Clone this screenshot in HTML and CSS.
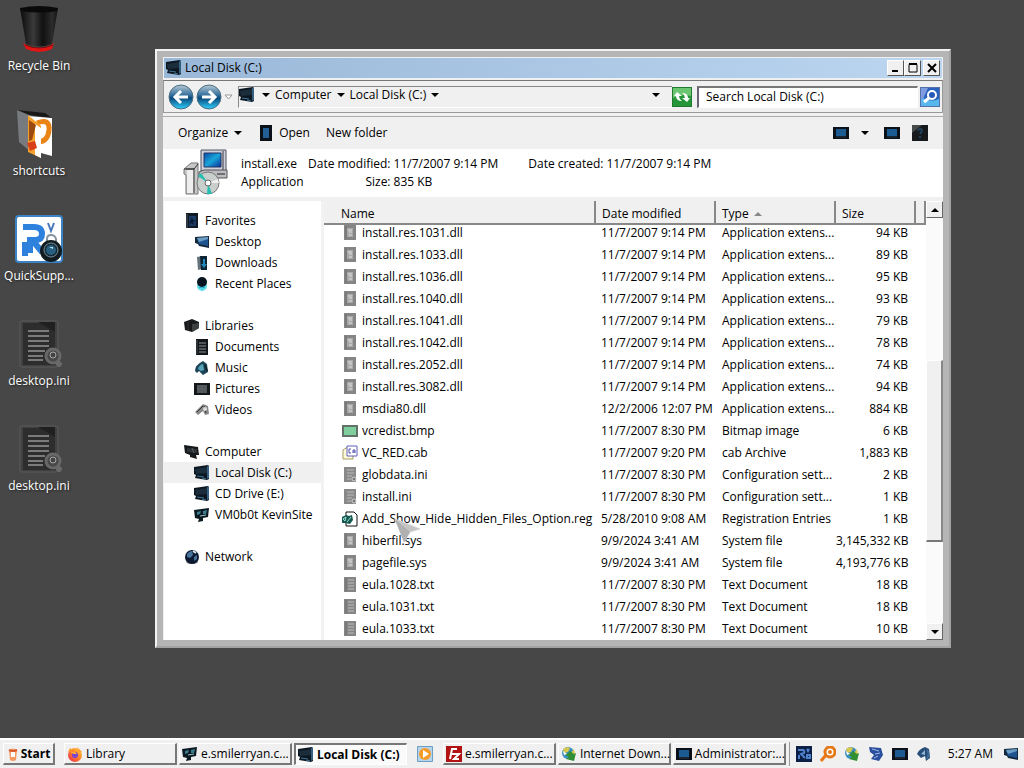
FILE: index.html
```
<!DOCTYPE html>
<html lang="en">
<head>
    <meta charset="utf-8">
    <meta name="viewport" content="width=device-width, initial-scale=1">
    <link rel="stylesheet" href="styles.css">
    <title>Local Disk (C:)</title>
</head>
<body>
<!-- shared icons -->
<svg class="defs" aria-hidden="true">
    <defs>
        <linearGradient id="g-blue" x1="0" y1="0" x2="0" y2="1">
            <stop offset="0" stop-color="#b9c9d3"/><stop offset=".4" stop-color="#3a75a0"/><stop offset=".55" stop-color="#0b4a7c"/><stop offset="1" stop-color="#2fd0ff"/>
        </linearGradient>
        <linearGradient id="g-bin"><stop offset="0" stop-color="#0a0a0a"/><stop offset=".35" stop-color="#3a3a3a"/><stop offset=".6" stop-color="#111"/><stop offset=".85" stop-color="#2c2c2c"/><stop offset="1" stop-color="#111"/></linearGradient>
        <linearGradient id="g-screen" x1="0" y1="0" x2="1" y2="1"><stop offset="0" stop-color="#0a4aa8"/><stop offset=".5" stop-color="#19a5d8"/><stop offset="1" stop-color="#0b2f9a"/></linearGradient>
        <linearGradient id="g-fox" x1="1" y1="0" x2="0" y2="1"><stop offset="0" stop-color="#ffd93b"/><stop offset=".5" stop-color="#ff7a2a"/><stop offset="1" stop-color="#e8265a"/></linearGradient>
    </defs>
    <symbol id="i-drive" viewBox="0 0 16 16">
        <path d="M0 2 14 0 15 1V14L13 15 1 13 2 10 0 9Z" fill="#0c1722"/><path d="M1 4 13 2V8L2 9Z" fill="#1b2c3b"/><path d="M13 1 15 1V13L13 14Z" fill="#35607f"/><path d="M3 11 10 12M8 13 12 14" stroke="#3f7392" fill="none"/>
    </symbol>
    <symbol id="i-pc" viewBox="0 0 16 16">
        <path d="M0 1 14 3 15 11 12 11 13 15 6 13V11L1 9Z" fill="#15191c"/><path d="M3 4 13 5 13 9 3 8Z" fill="#2d3336"/><path d="M8 4 10 9" stroke="#596066"/>
    </symbol>
    <symbol id="i-site" viewBox="0 0 16 16">
        <path d="M0 3 15 1 14 10 9 11 9 14 4 15 5 12 1 11Z" fill="#0b1a22"/><path d="M3 5 7 4 6 7 3 8ZM9 4 13 3 12 7 9 7Z" fill="#3b7d90"/><path d="M6 9 12 8" stroke="#9fc5cc"/>
    </symbol>
    <symbol id="i-star" viewBox="0 0 16 16">
        <path d="M2 0H14V15H2Z" fill="#121a24"/><path d="M5 3H12V13H5Z" fill="#1b3d68"/><path d="M8 4 9 7 12 7 9 9 10 12 7 10 5 12 6 8" fill="#0c1c36"/><path d="M3 1V15" stroke="#4b5864"/>
    </symbol>
    <symbol id="i-desktop" viewBox="0 0 16 16">
        <path d="M1 3 15 2V14L5 12 4 10 1 9Z" fill="#14283c"/><path d="M3 4 14 3V12L5 10Z" fill="#1e5590"/><path d="M3 4 14 3V5L5 8Z" fill="#6b9ec5"/>
    </symbol>
    <symbol id="i-down" viewBox="0 0 16 16">
        <path d="M3 2 8 1V14L4 15Z" fill="#66737b"/><path d="M6 1H13V15H7Z" fill="#0d2434"/><path d="M9 4H11V9H13L10 13 7 9H9Z" fill="#2689bb"/>
    </symbol>
    <symbol id="i-recent" viewBox="0 0 16 16">
        <circle cx="8" cy="10" r="5" fill="#5edbe9"/><circle cx="8" cy="6" r="5" fill="#07141f"/><path d="M5 11Q8 13 11 11" stroke="#1aa2c0" fill="none"/>
    </symbol>
    <symbol id="i-lib" viewBox="0 0 16 16">
        <path d="M0 4 8 1 15 4 15 10 8 14 1 12Z" fill="#17191a"/><path d="M8 6 15 5V10L8 14Z" fill="#3d4041"/><path d="M4 4V12" stroke="#34383a"/>
    </symbol>
    <symbol id="i-doc" viewBox="0 0 16 16">
        <path d="M2 0H14V16H2Z" fill="#14181b"/><path d="M5 4H12M5 7H12M5 10H12M5 13H12" stroke="#8a9499"/><path d="M3 1V15" stroke="#444c50"/>
    </symbol>
    <symbol id="i-music" viewBox="0 0 16 16">
        <path d="M1 11Q1 5 9 1L13 4 14 12 9 15 5 11 3 13Z" fill="#1c4658"/><path d="M4 9Q5 5 9 4L10 10 7 11Z" fill="#57a3b8"/><path d="M11 5 13 11" stroke="#10222d" stroke-width="2"/>
    </symbol>
    <symbol id="i-pic" viewBox="0 0 16 16">
        <path d="M0 2H16V14H0Z" fill="#15181a"/><path d="M3 4H13V12H3Z" fill="#50585b"/><path d="M3 8H13M8 4V12" stroke="#5a6266"/>
    </symbol>
    <symbol id="i-video" viewBox="0 0 16 16">
        <path d="M1 10 9 2 14 4 15 12 11 13 9 9 4 13Z" fill="#888"/><path d="M3 10 9 4M10 4 12 11" stroke="#333" fill="none"/><circle cx="11" cy="7" r="2" fill="#ddd"/>
    </symbol>
    <symbol id="i-net" viewBox="0 0 16 16">
        <ellipse cx="8" cy="13" rx="6" ry="2" fill="#999"/><circle cx="8" cy="8" r="7" fill="#0b1830"/><path d="M3 5Q5 2 8 2L9 6 6 9 3 8ZM10 8 13 6 13 10 10 12Z" fill="#46749c"/><path d="M9 2 12 4" stroke="#d9eaf5" stroke-width="2"/>
    </symbol>
    <symbol id="i-file" viewBox="0 0 16 16">
        <path d="M2 0H14V15H2Z" fill="#858585"/><path d="M4 1V14" stroke="#707070"/><path d="M5 3H11V12H5Z" fill="#a9a9a9"/><path d="M6 5H10M7 7H10M7 10H10" stroke="#dedede"/>
    </symbol>
    <symbol id="i-text" viewBox="0 0 16 16">
        <path d="M2 0H14V15H2Z" fill="#858585"/><path d="M4 1V14" stroke="#707070"/><path d="M6 3H12M6 6H12M6 9H12M6 12H12" stroke="#bdbdbd"/>
    </symbol>
    <symbol id="i-ini" viewBox="0 0 16 16">
        <path d="M2 0H14V15H2Z" fill="#888"/><path d="M5 3H12M5 6H12M5 9H10M5 12H9" stroke="#bbb"/><circle cx="12" cy="12" r="2" fill="#777" stroke="#d2d2d2"/>
    </symbol>
    <symbol id="i-bmp" viewBox="0 0 16 16">
        <path d="M0 2H16V14H0Z" fill="#627268"/><path d="M2 4H14V12H2Z" fill="#7fce9d"/>
    </symbol>
    <symbol id="i-cab" viewBox="0 0 16 16">
        <path d="M1 5 4 3H11V14H1Z" fill="#fffbd9" stroke="#a49b62"/><path d="M5 1H15V11H5Z" fill="#fff" stroke="#6261b8"/><path d="M9 4H7V8H9M11 8V5H13V8M11 7H13" stroke="#5150b0" fill="none"/>
    </symbol>
    <symbol id="i-reg" viewBox="0 0 16 16">
        <path d="M4 1H12L15 4V15H4Z" fill="#fff" stroke="#111"/><path d="M0 6 4 4 7 5 10 4 11 9 8 13 3 12 0 12Z" fill="#155951"/><path d="M1 8 4 6 3 10ZM5 11 9 6" stroke="#a1e0d3" fill="none"/>
    </symbol>
    <symbol id="i-screen" viewBox="0 0 16 16">
        <path d="M0 2H16V14H0Z" fill="#0a1119"/><path d="M3 4H13V11H3Z" fill="#1b5b92"/><path d="M3 12H13" stroke="#263947"/>
    </symbol>
    <symbol id="i-refresh" viewBox="0 0 20 20">
        <path d="M0 0H20V20H0Z" fill="#27953a"/><path d="M1 1H19V9Q10 6 1 11Z" fill="#6cc570"/><path d="M2 9 5 5 10 9H7Q7 12 10 14 4 14 4 9Z" fill="#fff"/><path d="M18 11 15 15 10 11H13Q13 8 10 6 16 6 16 11Z" fill="#fff"/><path d="M.5.5H19.5V19.5H.5Z" fill="none" stroke="#217a30"/>
    </symbol>
    <symbol id="i-search" viewBox="0 0 20 20">
        <path d="M0 0H20V20H0Z" fill="#2b62be"/><path d="M1 10Q10 16 19 12V19H1Z" fill="#58b8ee"/><path d="M1 1H8L3 12H1Z" fill="#7f9ce0"/><circle cx="12" cy="8" r="4" fill="#2858b5" stroke="#fff" stroke-width="2"/><path d="M9 11 4 15" stroke="#fff" stroke-width="3"/><path d="M.5.5H19.5V19.5H.5Z" fill="none" stroke="#5572a8"/>
    </symbol>
    <symbol id="i-idm" viewBox="0 0 16 16">
        <circle cx="7" cy="7" r="6" fill="#3d8ec2"/><path d="M2 3Q6 0 9 2L7 6 3 7ZM9 8 13 3 14 8Z" fill="#d8c94c"/><path d="M3 8H6L9 5 13 8 15 7 13 15 5 13 8 11Z" fill="#2f8f32"/><path d="M2 5 6 8 3 9Z" fill="#fff"/>
    </symbol>
    <symbol id="i-ini-large" viewBox="0 0 48 48">
        <rect x="5" y="1" width="38" height="46" rx="2" fill="#414141" stroke="#5c5c5c"/><path d="M8 3H40V45H8Z" fill="#2d2d2d"/><path d="M23 2H40V12Z" fill="#202020"/>
        <path d="M13 11H34M13 16H34M13 21H34M13 26H34M13 31H30M13 36H28M13 40H28" stroke="#7b7b7b" stroke-width="2"/>
        <circle cx="38" cy="36" r="7" fill="#484848" stroke="#686868" stroke-width="3"/><circle cx="38" cy="35" r="3" fill="#444" stroke="#ababab"/><path d="M41 44H47M44 41V47" stroke="#6a6a6a" stroke-width="3"/>
    </symbol>
</svg>

<main class="desktop">
    <ul class="shortcuts">
        <li><a href="#">
            <svg viewBox="0 0 48 48"><path d="M8 38Q24 48 39 38L37 44Q24 50 11 44Z" fill="#e21515"/><path d="M5 3 43 3 37 39Q24 44 11 39Z" fill="url(#g-bin)"/><path d="M5 3Q24-1 43 3L42 6Q24 9 6 6Z" fill="#0a0a0a"/><path d="M10 40Q24 46 38 40" fill="none" stroke="#7d0d0d"/></svg>
            <span>Recycle Bin</span></a></li>
        <li><a href="#">
            <svg viewBox="0 0 48 48"><path d="M2 0 16 3V42L4 32Z" fill="#777b80"/><path d="M2 0 30 3 37 8 14 5Z" fill="#191919"/><path d="M13 6 37 8V46L26 43Z" fill="#fff"/><path d="M22 13Q35 8 34 20 33 31 24 32" fill="none" stroke="#e98415" stroke-width="5"/><path d="M13 5 26 16V48L13 42Z" fill="#f5a02b"/><path d="M20 14 26 18V48L20 45Z" fill="#fff"/><path d="M14 10 21 15 17 30 14 31Z" fill="#9a4b12"/><path d="M12 33 20 31 22 38 15 41Z" fill="#d83f18"/></svg>
            <span>shortcuts</span></a></li>
        <li><a href="#">
            <svg viewBox="0 0 48 48"><rect x="1" y="1" width="46" height="46" rx="3" fill="#fff" stroke="#3a83c7" stroke-width="2"/><path d="M8 12H19Q27 12 27 19 27 25 20 25H15V38M10 27V41M18 26 27 37" fill="none" stroke="#2e82de" stroke-width="6"/><path d="M33 8 36 16 39 8" fill="none" stroke="#4777b8" stroke-width="2"/><path d="M32 28V24Q32 20 36 20T41 24V28" fill="none" stroke="#8595a0" stroke-width="2"/><circle cx="36" cy="36" r="11" fill="#111b20"/><circle cx="36" cy="35" r="7" fill="#172b36" stroke="#778e99"/><circle cx="36" cy="35" r="5" fill="#285f80"/><path d="M34 32H38V34Z" fill="#bde9f4"/></svg>
            <span>QuickSupp...</span></a></li>
        <li><a href="#"><svg><use href="#i-ini-large"/></svg><span>desktop.ini</span></a></li>
        <li><a href="#"><svg><use href="#i-ini-large"/></svg><span>desktop.ini</span></a></li>
    </ul>

    <section class="window">
        <header class="titlebar">
            <svg class="icon"><use href="#i-drive"/></svg>
            <h1>Local Disk (C:)</h1>
            <button class="winbtn" aria-label="Minimize"><svg viewBox="0 0 12 12"><path d="M2 9H8" stroke="#000" stroke-width="2"/></svg></button>
            <button class="winbtn" aria-label="Maximize"><svg viewBox="0 0 12 12"><path d="M2 2.5H10V10H2Z" fill="none" stroke="#000"/><path d="M2 2H10" stroke="#000" stroke-width="2"/></svg></button>
            <button class="winbtn close" aria-label="Close"><svg viewBox="0 0 12 12"><path d="M2 2 10 10M10 2 2 10" stroke="#000" stroke-width="2"/></svg></button>
        </header>

        <nav class="addressbar">
            <div class="history">
                <button aria-label="Back"><svg viewBox="0 0 26 26"><circle cx="13" cy="13" r="12" fill="url(#g-blue)" stroke="#4c6e82"/><path d="M20 13H8M13 7 7 13 13 19" fill="none" stroke="#fff" stroke-width="3"/></svg></button>
                <button aria-label="Forward"><svg viewBox="0 0 26 26"><circle cx="13" cy="13" r="12" fill="url(#g-blue)" stroke="#4c6e82"/><path d="M6 13H18M13 7 19 13 13 19" fill="none" stroke="#fff" stroke-width="3"/></svg></button>
                <button class="recent" aria-label="Recent pages"><svg viewBox="0 0 9 6"><path d="M1 1H8L4.500 5Z" fill="#fff" stroke="#999"/></svg></button>
            </div>
            <div class="path">
                <svg class="icon"><use href="#i-drive"/></svg>
                <i class="arrow"></i><a href="#">Computer</a>
                <i class="arrow"></i><a href="#">Local Disk (C:)</a>
                <i class="arrow"></i>
                <button class="drop" aria-label="Previous locations"><i class="arrow"></i></button>
            </div>
            <button class="square" aria-label="Refresh"><svg><use href="#i-refresh"/></svg></button>
            <input class="search" type="text" aria-label="Search" placeholder="Search Local Disk (C:)">
            <button class="square go" aria-label="Go"><svg><use href="#i-search"/></svg></button>
        </nav>

        <div class="toolbar">
            <button class="organize">Organize <i class="arrow"></i></button>
            <button class="open"><svg class="icon" viewBox="0 0 16 16"><path d="M2 0H14V16H2Z" fill="#0b1118"/><path d="M5 3H11V13H5Z" fill="#235f94"/></svg> Open</button>
            <button>New folder</button>
            <div class="views">
                <button aria-label="Change view"><svg class="icon"><use href="#i-screen"/></svg></button>
                <button class="more" aria-label="More view options"><i class="arrow"></i></button>
                <button aria-label="Preview pane"><svg class="icon"><use href="#i-screen"/></svg></button>
                <button aria-label="Help"><svg class="icon" viewBox="0 0 16 16"><path d="M0 0H16V16H0Z" fill="#15191b"/><path d="M0 0H10L0 8Z" fill="#454a4b"/><path d="M6 6Q7 3 9 4T8 9M8 11V13" fill="none" stroke="#22405a" stroke-width="2"/></svg></button>
            </div>
        </div>

        <div class="details">
            <svg class="appicon" viewBox="0 0 48 48">
                <path d="M3 20 10 14H17V45H5V26L3 25Z" fill="#c7c7c7" stroke="#777"/><path d="M5 20H13V44M3 20 13 20 17 15" fill="none" stroke="#333"/><path d="M6 21H12V44H6Z" fill="#eee"/>
                <path d="M20 1H45V22H20Z" fill="#cfd2dd" stroke="#4d4f58"/><path d="M23 4H40V18H23Z" fill="url(#g-screen)" stroke="#243564"/><path d="M42 2V21" stroke="#81838d" stroke-width="2"/>
                <path d="M18 23 23 21H46V29H18Z" fill="#bcbcc2" stroke="#555"/><path d="M36 25H44" stroke="#222"/>
                <circle cx="27" cy="34" r="11" fill="#c9cfcd" stroke="#777"/><path d="M27 34 17 27 20 24ZM27 34 31 45 26 45Z" fill="#25beb0"/><path d="M27 34 37 30 38 34Z" fill="#eee"/><circle cx="27" cy="34" r="3" fill="#fff" stroke="#666"/>
            </svg>
            <div class="what"><b>install.exe</b><span>Application</span></div>
            <dl>
                <dt>Date modified:</dt><dd>11/7/2007 9:14 PM</dd>
                <dt>Size:</dt><dd>835 KB</dd>
            </dl>
            <dl class="created">
                <dt>Date created:</dt><dd>11/7/2007 9:14 PM</dd>
            </dl>
        </div>

        <div class="content">
            <nav class="tree">
                <ul>
                    <li><a href="#"><svg class="icon"><use href="#i-star"/></svg>Favorites</a>
                        <ul>
                            <li><a href="#"><svg class="icon"><use href="#i-desktop"/></svg>Desktop</a></li>
                            <li><a href="#"><svg class="icon"><use href="#i-down"/></svg>Downloads</a></li>
                            <li><a href="#"><svg class="icon"><use href="#i-recent"/></svg>Recent Places</a></li>
                        </ul>
                    </li>
                    <li><a href="#"><svg class="icon"><use href="#i-lib"/></svg>Libraries</a>
                        <ul>
                            <li><a href="#"><svg class="icon"><use href="#i-doc"/></svg>Documents</a></li>
                            <li><a href="#"><svg class="icon"><use href="#i-music"/></svg>Music</a></li>
                            <li><a href="#"><svg class="icon"><use href="#i-pic"/></svg>Pictures</a></li>
                            <li><a href="#"><svg class="icon"><use href="#i-video"/></svg>Videos</a></li>
                        </ul>
                    </li>
                    <li><a href="#"><svg class="icon"><use href="#i-pc"/></svg>Computer</a>
                        <ul>
                            <li><a href="#" class="current"><svg class="icon"><use href="#i-drive"/></svg>Local Disk (C:)</a></li>
                            <li><a href="#"><svg class="icon"><use href="#i-drive"/></svg>CD Drive (E:)</a></li>
                            <li><a href="#"><svg class="icon"><use href="#i-site"/></svg>VM0b0t KevinSite</a></li>
                        </ul>
                    </li>
                    <li><a href="#"><svg class="icon"><use href="#i-net"/></svg>Network</a></li>
                </ul>
            </nav>

            <div class="files">
                <table>
                    <colgroup><col><col class="c-date"><col class="c-type"><col class="c-size"><col class="c-end"></colgroup>
                    <thead>
                        <tr><th>Name</th><th>Date modified</th><th>Type <i class="sort"></i></th><th>Size</th><th></th></tr>
                    </thead>
                    <tbody>
                        <tr class="cut"><td><svg class="icon"><use href="#i-file"/></svg>install.res.1031.dll</td><td>11/7/2007 9:14 PM</td><td>Application extens...</td><td>94 KB</td><td></td></tr>
                        <tr><td><svg class="icon"><use href="#i-file"/></svg>install.res.1033.dll</td><td>11/7/2007 9:14 PM</td><td>Application extens...</td><td>89 KB</td><td></td></tr>
                        <tr><td><svg class="icon"><use href="#i-file"/></svg>install.res.1036.dll</td><td>11/7/2007 9:14 PM</td><td>Application extens...</td><td>95 KB</td><td></td></tr>
                        <tr><td><svg class="icon"><use href="#i-file"/></svg>install.res.1040.dll</td><td>11/7/2007 9:14 PM</td><td>Application extens...</td><td>93 KB</td><td></td></tr>
                        <tr><td><svg class="icon"><use href="#i-file"/></svg>install.res.1041.dll</td><td>11/7/2007 9:14 PM</td><td>Application extens...</td><td>79 KB</td><td></td></tr>
                        <tr><td><svg class="icon"><use href="#i-file"/></svg>install.res.1042.dll</td><td>11/7/2007 9:14 PM</td><td>Application extens...</td><td>78 KB</td><td></td></tr>
                        <tr><td><svg class="icon"><use href="#i-file"/></svg>install.res.2052.dll</td><td>11/7/2007 9:14 PM</td><td>Application extens...</td><td>74 KB</td><td></td></tr>
                        <tr><td><svg class="icon"><use href="#i-file"/></svg>install.res.3082.dll</td><td>11/7/2007 9:14 PM</td><td>Application extens...</td><td>94 KB</td><td></td></tr>
                        <tr><td><svg class="icon"><use href="#i-file"/></svg>msdia80.dll</td><td>12/2/2006 12:07 PM</td><td>Application extens...</td><td>884 KB</td><td></td></tr>
                        <tr><td><svg class="icon"><use href="#i-bmp"/></svg>vcredist.bmp</td><td>11/7/2007 8:30 PM</td><td>Bitmap image</td><td>6 KB</td><td></td></tr>
                        <tr><td><svg class="icon"><use href="#i-cab"/></svg>VC_RED.cab</td><td>11/7/2007 9:20 PM</td><td>cab Archive</td><td>1,883 KB</td><td></td></tr>
                        <tr><td><svg class="icon"><use href="#i-ini"/></svg>globdata.ini</td><td>11/7/2007 8:30 PM</td><td>Configuration sett...</td><td>2 KB</td><td></td></tr>
                        <tr><td><svg class="icon"><use href="#i-ini"/></svg>install.ini</td><td>11/7/2007 8:30 PM</td><td>Configuration sett...</td><td>1 KB</td><td></td></tr>
                        <tr><td><svg class="icon"><use href="#i-reg"/></svg>Add_Show_Hide_Hidden_Files_Option.reg</td><td>5/28/2010 9:08 AM</td><td>Registration Entries</td><td>1 KB</td><td></td></tr>
                        <tr><td><svg class="icon"><use href="#i-file"/></svg>hiberfil.sys</td><td>9/9/2024 3:41 AM</td><td>System file</td><td>3,145,332 KB</td><td></td></tr>
                        <tr><td><svg class="icon"><use href="#i-file"/></svg>pagefile.sys</td><td>9/9/2024 3:41 AM</td><td>System file</td><td>4,193,776 KB</td><td></td></tr>
                        <tr><td><svg class="icon"><use href="#i-text"/></svg>eula.1028.txt</td><td>11/7/2007 8:30 PM</td><td>Text Document</td><td>18 KB</td><td></td></tr>
                        <tr><td><svg class="icon"><use href="#i-text"/></svg>eula.1031.txt</td><td>11/7/2007 8:30 PM</td><td>Text Document</td><td>18 KB</td><td></td></tr>
                        <tr><td><svg class="icon"><use href="#i-text"/></svg>eula.1033.txt</td><td>11/7/2007 8:30 PM</td><td>Text Document</td><td>10 KB</td><td></td></tr>
                    </tbody>
                </table>
            </div>
            <div class="scrollbar">
                <button aria-label="Scroll up"><i class="arrow up"></i></button>
                <div class="track"><div class="thumb"></div></div>
                <button aria-label="Scroll down"><i class="arrow"></i></button>
            </div>
        </div>
    </section>

    <svg class="cursor" viewBox="0 0 28 28"><path d="M1 1 26 11 16 14 10 24Z" fill="#c4c4c4" stroke="#d5d5d5"/><path d="M1 1 16 14 10 24Z" fill="#b0b0b0"/></svg>
</main>

<footer class="taskbar">
    <button class="start"><svg class="icon" viewBox="0 0 16 16"><path d="M4 4Q8 1 12 4L11 14Q8 16 5 14Z" fill="#f59a62"/><path d="M6 6H10V11H6Z" fill="#fff"/><path d="M4 4Q8 6 12 4" fill="none" stroke="#d65a2e" stroke-width="2"/></svg>Start</button>
    <div class="tasks">
        <button class="task"><svg class="icon" viewBox="0 0 16 16"><circle cx="8" cy="9" r="7" fill="url(#g-fox)"/><path d="M1 6 3 2 6 5ZM10 1 15 6 12 6Z" fill="#ff9d2c"/><circle cx="8" cy="9" r="3" fill="#7a45d0"/><path d="M3 6 8 6 10 8 7 8Z" fill="#ffb02e"/></svg><span>Library</span></button>
        <button class="task"><svg class="icon"><use href="#i-site"/></svg><span>e.smilerryan.c...</span></button>
        <button class="task active"><svg class="icon"><use href="#i-drive"/></svg><span>Local Disk (C:)</span></button>
        <button class="quick" aria-label="Media player"><svg class="icon" viewBox="0 0 16 16"><path d="M.5.5H15.5V15.5H.5Z" fill="#b6d4ea" stroke="#6d9ec4"/><circle cx="8" cy="8" r="6" fill="#f59b2a"/><path d="M6 4 12 8 6 12Z" fill="#fff"/></svg></button>
        <button class="task"><svg class="icon" viewBox="0 0 16 16"><path d="M0 0H16V16H0Z" fill="#b31212"/><path d="M4 13 6 3H11M5 8H9M8 8H13L8 13H13" fill="none" stroke="#fff" stroke-width="2"/></svg><span>e.smilerryan.c...</span></button>
        <button class="task"><svg class="icon"><use href="#i-idm"/></svg><span>Internet Down...</span></button>
        <button class="task"><svg class="icon"><use href="#i-screen"/></svg><span>Administrator:...</span></button>
    </div>
    <div class="tray">
        <svg class="icon" viewBox="0 0 16 16"><path d="M0 0H16V16H0Z" fill="#0c1f45"/><path d="M2 4H7Q9 5 8 7L5 8 9 12M3 9V13M11 3 12 5 13 3M11 9H14V12H11Z" fill="none" stroke="#4e82cc" stroke-width="2"/></svg>
        <svg class="icon" viewBox="0 0 16 16"><circle cx="10" cy="6" r="5" fill="#fff" stroke="#e67817" stroke-width="3"/><circle cx="10" cy="6" r="2" fill="#e67817"/><path d="M6 9 1 15" stroke="#e67817" stroke-width="3"/></svg>
        <svg class="icon"><use href="#i-idm"/></svg>
        <svg class="icon" viewBox="0 0 16 16"><path d="M1 1 13 2 15 9 11 15 3 13 6 9 2 6Z" fill="#2c4f9d"/><path d="M4 3 11 5M7 8 12 7M6 12 10 10" stroke="#9fb8e5" stroke-width="1"/></svg>
        <svg class="icon"><use href="#i-screen"/></svg>
        <svg class="icon" viewBox="0 0 16 16"><path d="M1 8Q3 3 9 1L13 3 14 12 10 15 9 10 5 12Z" fill="#284d77"/><path d="M5 8 9 4 9 9Z" fill="#90b5d5"/><path d="M11 4Q14 8 11 13" fill="none" stroke="#426b96" stroke-width="2"/></svg>
        <time>5:27 AM</time>
        <svg class="icon"><use href="#i-desktop"/></svg>
    </div>
</footer>
</body>
</html>
```
FILE: styles.css
```
*{
    box-sizing: border-box;
}
body{
    margin: 0;
    height: 100vh;
    display: flex;
    flex-direction: column;
    overflow: hidden;
    background: #474747;
    color: #000;
    font-family: "Open Sans", "Noto Sans", sans-serif;
    font-size: 12px;
    line-height: 16px;
}
ul, dl, dd, h1{
    margin: 0;
    padding: 0;
    list-style: none;
}
a{
    color: inherit;
    text-decoration: none;
}
button{
    display: flex;
    align-items: center;
    justify-content: center;
    padding: 0;
    border: none;
    background: none;
    color: inherit;
    font: inherit;
    white-space: nowrap;
}
.defs{
    position: absolute;
    width: 0;
    height: 0;
}
.icon{
    flex: none;
    width: 16px;
    height: 16px;
}
.arrow{
    flex: none;
    border: 4px solid transparent;
    border-top-color: #000;
    border-bottom: none;
}
.arrow.up{
    border-top: none;
    border-bottom: 4px solid #000;
}

/* desktop */
.desktop{
    position: relative;
    flex: 1;
    min-height: 0;
}
.shortcuts{
    width: 78px;
    padding-top: 5px;
    display: flex;
    flex-direction: column;
    gap: 36px;
}
.shortcuts a{
    display: flex;
    flex-direction: column;
    align-items: center;
    gap: 5px;
    color: #fff;
    text-shadow: 1px 1px 2px #222;
}
.shortcuts svg{
    width: 48px;
    height: 48px;
}

/* explorer window */
.window{
    position: absolute;
    inset: 49px 73px 90px 155px;
    display: flex;
    flex-direction: column;
    border: 2px solid #f2f2f2;
    border-right-color: #a3a3a3;
    border-bottom-color: #a3a3a3;
    background: #f0f0f0;
    box-shadow: inset 0 0 0 6px #b5b5b5;
    padding: 6px;
}
.titlebar{
    display: flex;
    align-items: center;
    height: 20px;
    margin: 1px 1px 2px;
    padding: 0 2px;
    background: linear-gradient(to right, #9ab8d8, #bcd6f1);
}
.titlebar h1{
    flex: 1;
    margin-left: 3px;
    font-size: 12px;
    font-weight: normal;
}
.winbtn{
    width: 17px;
    height: 16px;
    background: #f0f0f0;
    border: 1px solid #fff;
    border-right-color: #555;
    border-bottom-color: #555;
}
.winbtn svg{
    width: 12px;
    height: 12px;
}
.close{
    margin-left: 2px;
}
.addressbar{
    display: flex;
    align-items: center;
    height: 33px;
    padding: 0 2px 0 4px;
    border: 1px solid #999;
    border-top-color: #777;
}
.history{
    display: flex;
    align-items: center;
    gap: 2px;
    width: 70px;
}
.history svg{
    display: block;
    width: 26px;
    height: 26px;
}
.history .recent svg{
    width: 9px;
    height: 6px;
}
.path{
    flex: 1;
    display: flex;
    align-items: center;
    gap: 5px;
    height: 22px;
    padding-bottom: 3px;
    border-top: 1px solid #888;
    border-left: 1px solid #888;
    border-bottom: 1px solid #fff;
}
.path .icon{
    margin-right: 2px;
}
.drop{
    width: 20px;
    margin-left: auto;
    margin-right: 6px;
}
.square svg{
    display: block;
    width: 20px;
    height: 20px;
}
.search{
    width: 221px;
    height: 22px;
    margin: 0 2px 0 5px;
    padding: 0 7px 2px;
    border: 1px solid #fff;
    border-top: 2px solid #777;
    border-left: 2px solid #6b6179;
    background: #fff;
    font: inherit;
}
.search::placeholder{
    color: #000;
    opacity: 1;
}
.toolbar{
    display: flex;
    align-items: center;
    gap: 16px;
    height: 33px;
    margin-top: 3px;
    padding: 0 15px;
    border-top: 1px solid #aaa;
}
.toolbar .organize{
    gap: 6px;
}
.toolbar .open{
    gap: 5px;
}
.views{
    display: flex;
    gap: 12px;
    margin-left: auto;
}
.views .more{
    margin-right: 3px;
}
.details{
    display: flex;
    align-items: center;
    height: 48px;
    padding-left: 18px;
    background: #fff;
}
.appicon{
    width: 48px;
    height: 48px;
}
.what{
    width: 67px;
    margin-left: 12px;
    line-height: 18px;
}
.what b, .what span{
    display: block;
    font-weight: normal;
}
.details dl{
    display: grid;
    grid-template-columns: auto auto;
    column-gap: 3px;
    line-height: 18px;
}
.details dt{
    text-align: right;
}
.details .created{
    align-self: flex-start;
    margin-top: 6px;
    margin-left: 30px;
}

/* navigation tree */
.content{
    flex: 1;
    display: flex;
    min-height: 0;
    margin: 4px 0 0 1px;
    background: #fff;
}
.tree{
    flex: none;
    width: 160px;
    padding-top: 9px;
    border-right: 3px solid #f2f2f2;
}
.tree > ul{
    display: flex;
    flex-direction: column;
    gap: 21px;
}
.tree a{
    display: flex;
    align-items: center;
    gap: 5px;
    height: 21px;
    padding-left: 20px;
    white-space: nowrap;
}
.tree ul ul a{
    padding-left: 30px;
}
.tree .current{
    background: #f0f0f0;
}

/* file list */
.files{
    flex: 1;
    min-width: 0;
    overflow: hidden;
}
.files table{
    width: 100%;
    table-layout: fixed;
    border-collapse: separate;
    border-spacing: 0;
}
.c-date, .c-type{
    width: 120px;
}
.c-size{
    width: 80px;
}
.c-end{
    width: 10px;
}
.files th{
    height: 24px;
    padding: 3px 6px 0;
    background: #f0f0f0;
    border-right: 2px solid #888;
    border-bottom: 2px solid #888;
    font-weight: normal;
    text-align: left;
}
.files th:first-child{
    padding-left: 17px;
}
.files th:last-child{
    padding: 0;
}
.sort{
    display: inline-block;
    margin-left: 2px;
    vertical-align: middle;
    border: 4px solid transparent;
    border-top: none;
    border-bottom: 4px solid #888;
}
.files td{
    height: 22px;
    padding: 0 5px;
    white-space: nowrap;
}
.files td:first-child{
    padding-left: 18px;
}
.files td:nth-child(3){
    padding-left: 6px;
}
.files td:nth-child(4){
    padding: 0 8px 0 0;
    text-align: right;
}
.files td:last-child{
    padding: 0;
}
.files td .icon{
    margin-right: 4px;
    vertical-align: top;
}
/* first visible row is partly scrolled under the header */
.files .cut td{
    height: 19px;
    padding-bottom: 3px;
}
.scrollbar{
    display: flex;
    flex-direction: column;
    width: 17px;
    background: #fafafa;
}
.scrollbar button{
    height: 17px;
    background: #f0f0f0;
    border: 1px solid #fff;
    border-right-color: #666;
    border-bottom-color: #666;
}
.track{
    flex: 1;
    display: grid;
    grid-template-rows: 35% 45% 20%;
}
.thumb{
    grid-row: 2;
    background: #f0f0f0;
    border: 1px solid #fff;
    border-right: 2px solid #888;
    border-bottom: 2px solid #777;
}
.cursor{
    position: absolute;
    left: 394px;
    top: 518px;
    width: 28px;
    height: 28px;
}

/* taskbar */
.taskbar{
    display: flex;
    align-items: center;
    height: 30px;
    padding: 0 5px 0 3px;
    background: #f0f0f0;
    border-top: 2px solid #fff;
}
.start, .task{
    height: 22px;
    border: 1px solid #fff;
    border-right: 2px solid #777;
    border-bottom: 2px solid #777;
    background: #f0f0f0;
}
.start{
    width: 52px;
    margin-right: 9px;
    padding-right: 2px;
    font-weight: bold;
}
.tasks{
    flex: 1;
    display: flex;
    align-items: center;
    gap: 2px;
    min-width: 0;
}
.task{
    flex: 0 1 113px;
    justify-content: flex-start;
    gap: 3px;
    min-width: 0;
    padding-left: 2px;
}
.task.active{
    border: 1px solid #fff;
    border-top: 2px solid #777;
    border-left: 2px solid #777;
    background: #fafafa;
    font-weight: bold;
}
.quick{
    margin: 0 8px;
}
.tray{
    display: flex;
    align-items: center;
    gap: 8px;
    height: 24px;
    margin-left: 3px;
    padding-left: 6px;
    border-left: 1px solid #999;
}
.tray time{
    margin: 0 2px 0 8px;
}
```
